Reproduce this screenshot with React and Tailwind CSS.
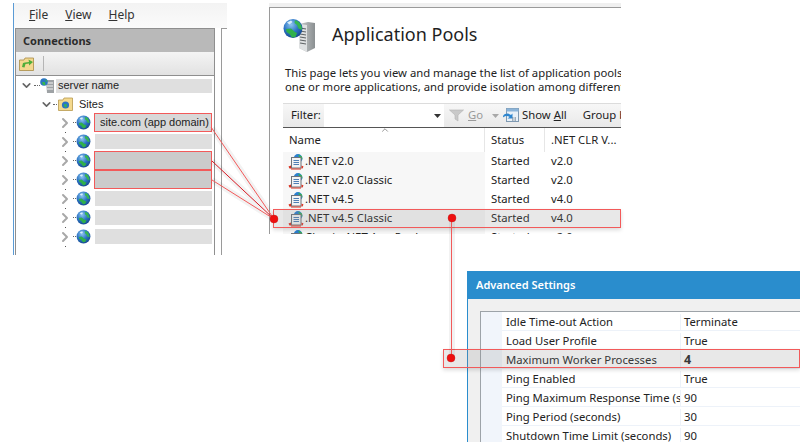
import { ChevronDown, ChevronRight, ChevronUp } from 'lucide-react';

const Globe = ({ size = 16, id = 'g' }) => (
  <svg width={size} height={size} viewBox="0 0 16 16" className="shrink-0">
    <defs>
      <radialGradient id={id} cx="0.4" cy="0.3" r="0.8">
        <stop offset="0" stopColor="#8fc6f0" />
        <stop offset="0.5" stopColor="#2b74c4" />
        <stop offset="1" stopColor="#123f82" />
      </radialGradient>
    </defs>
    <circle cx="8" cy="8" r="7.4" fill={`url(#${id})`} />
    <path d="M3 8.5 L6 8 L9 10.5 L11 11 L10 13.5 L7.5 14 L5.5 11.5 L3.5 10.5 Z" fill="#2fb04a" />
    <path d="M9.5 2 L12.5 3 L14 6 L14.6 8.5 L12 8 L11 5.5 L9.5 4.5 Z" fill="#35b552" />
    <path d="M4 3.5 L6.5 2.4 L7.5 3.5 L5.5 5 Z" fill="#d8eefb" />
  </svg>
);

const ServerGlobe = ({ id = 'sg' }) => (
  <svg width="32" height="33" viewBox="0 0 32 33" className="shrink-0">
    <defs>
      <linearGradient id={`${id}-t`} x1="0" x2="1" y1="0" y2="0">
        <stop offset="0" stopColor="#c9cccd" />
        <stop offset="1" stopColor="#8a8f91" />
      </linearGradient>
      <radialGradient id={`${id}-g`} cx="0.4" cy="0.3" r="0.8">
        <stop offset="0" stopColor="#8fc6f0" />
        <stop offset="0.5" stopColor="#2b74c4" />
        <stop offset="1" stopColor="#123f82" />
      </radialGradient>
    </defs>
    <path d="M16 5 L25 3 L32 4 L32 29 L24 33 L16 29 Z" fill={`url(#${id}-t)`} />
    <path d="M16 5 L24 6 L24 33 L16 29 Z" fill="#dfe1e2" />
    <path d="M17 9 L23 10 M17 12 L23 13 M17 15 L23 16 M17 18 L23 19 M17 21 L23 22 M17 24 L23 25" stroke="#5f6466" strokeWidth="1.2" />
    <circle cx="10" cy="9.5" r="9.5" fill={`url(#${id}-g)`} />
    <path d="M3 10 L8 9.5 L12 13 L14 14 L12.5 18 L9 18.5 L6.5 15 L3.5 13 Z" fill="#2fb04a" />
    <path d="M12 1 L16 3 L18.5 7 L19 11 L15.5 9.5 L14 6 L11.5 4 Z" fill="#35b552" />
    <path d="M4 3.5 L8 1.4 L9.5 3 L6.5 5.5 Z" fill="#d8eefb" />
  </svg>
);

const ServerSmall = () => (
  <svg width="14" height="15" viewBox="0 0 14 15" className="shrink-0">
    <path d="M6 2 L14 2 L14 15 L7 15 Z" fill="#9ea2a5" />
    <path d="M7 5 H13 M7 8 H13 M7 11 H13" stroke="#f2f2f2" strokeWidth="1" />
    <circle cx="4" cy="4" r="3.8" fill="#2b74c4" />
    <path d="M2 4 L5 4 L5.5 7 L3 7 Z M5 1 L7.5 3 L6 4 Z" fill="#35b552" />
  </svg>
);

const FolderGlobe = () => (
  <svg width="15" height="14" viewBox="0 0 15 14" className="shrink-0">
    <path d="M0.5 3 L5 3 L6 1 L14.5 1 L14.5 13.5 L0.5 13.5 Z" fill="#f4d98e" stroke="#b8994e" strokeWidth="0.8" />
    <circle cx="7.5" cy="8" r="3.6" fill="#2b74c4" />
    <path d="M6 7 L9 7.5 L8.5 10.5 L6.5 10 Z" fill="#35b552" />
  </svg>
);

const ConnectFolder = () => (
  <svg width="15" height="15" viewBox="0 0 15 15" className="shrink-0">
    <path d="M0.5 4 L5 4 L6 2 L14.5 2 L14.5 14.5 L0.5 14.5 Z" fill="#f3d88f" stroke="#a88b45" strokeWidth="0.8" />
    <path d="M3 11 L4 7 L6 6.5 L10 6 L9.5 3.5 L14 6 L10 9.5 L10 7.5 L6.5 8 L5.5 11.5 Z" fill="#4fae3a" />
  </svg>
);

const PoolIcon = () => (
  <svg width="16" height="16" viewBox="0 0 16 16" className="shrink-0">
    <circle cx="10" cy="4.5" r="4.4" fill="#2b7fd0" />
    <path d="M10 0.5 L14 2.5 L14.4 5.5 L12 4.5 Z" fill="#35b552" />
    <rect x="3.5" y="3.5" width="9.5" height="10.5" fill="#f2f3f4" stroke="#6f747a" strokeWidth="1" />
    <path d="M5.5 6.5 H11 M5.5 8.5 H11 M5.5 10.5 H11" stroke="#4f7fb5" strokeWidth="1" />
    <path d="M0.5 12.5 L3 11.5 L3 14.5 L1.5 14.5 Z M13.5 11.5 L15.5 12.5 L14.5 14.5 L13.5 14.5 Z M3 14.5 H13 V15.5 H3 Z" fill="#d8301f" />
  </svg>
);

const Funnel = () => (
  <svg width="15" height="13" viewBox="0 0 15 13" className="shrink-0">
    <path d="M0.5 1 L14.5 1 L9 6 L9 12 L6 10 L6 6 Z" fill="#c9c9c9" stroke="#b4b4b4" strokeWidth="0.6" />
  </svg>
);

const ShowAllIcon = () => (
  <svg width="16" height="16" viewBox="0 0 16 16" className="shrink-0">
    <rect x="3.5" y="0.5" width="12" height="13" fill="#e9f1f8" stroke="#7f9ab3" />
    <rect x="3.5" y="0.5" width="12" height="3" fill="#8cb4d8" />
    <path d="M0 8 C2 5 6 5 8 7 L9.5 5.5 L9.5 10.5 L4.5 10.5 L6.5 9 C5 7.5 2 7.5 0 9.5 Z" fill="#2e86cf" />
    <path d="M9 10 H14 M9 12 H14" stroke="#5b6d7d" strokeWidth="1" strokeDasharray="1.5 1" />
  </svg>
);

const Caret = ({ color = '#333' }) => (
  <svg width="7" height="4" viewBox="0 0 7 4" className="shrink-0">
    <path d="M0 0 H7 L3.5 4 Z" fill={color} />
  </svg>
);

const siteRows = [
  { label: 'site.com (app domain)', boxed: true },
  {},
  { boxed: true, dark: true },
  { boxed: true, dark: true },
  {},
  {},
  {},
];

const SiteRow = ({ row, index }) => (
  <div className="relative flex items-center h-[19px] pl-[41px]">
    <ChevronRight size={16} strokeWidth={3} className="shrink-0 text-[#a8a8a8]" />
    <span className="w-[3px] border-t border-dotted border-[#666]" />
    <Globe size={15} id={`site-${index}`} />
    {row.boxed ? (
      <div className={`ml-[3px] w-[118px] h-[19px] pl-[5px] flex items-center border border-[#f25a5a] text-[11px] whitespace-nowrap text-[#222] ${row.dark ? 'bg-[#cbcbcb]' : 'bg-[#d8d8d8]'}`}>
        {row.label}
      </div>
    ) : (
      <div className="ml-[4px] w-[117px] h-[15px] bg-[#dfdfdf]" />
    )}
    <span className="absolute left-[49px] bottom-[-1px] w-px h-px bg-[#555]" />
  </div>
);

const ConnectionsWindow = () => (
  <div className="absolute left-[13px] top-[3px] w-[214px] h-[252px] flex flex-col border-l border-[#5b9bd5] overflow-hidden">
    <div className="h-[25px] shrink-0 flex items-center gap-[17px] pl-[15px] pb-[2px] bg-gradient-to-b from-[#f3f3f3] to-[#fbfbfb] text-[12px] text-[#333]">
      <span><span className="underline">F</span>ile</span>
      <span><span className="underline">V</span>iew</span>
      <span><span className="underline">H</span>elp</span>
    </div>
    <div className="flex-1 flex pl-[1px]">
      <div className="w-[200px] flex flex-col border-x border-[#8f8f8f]">
        <div className="h-[24px] shrink-0 flex items-center pl-[7px] pt-[1px] bg-[#b9b9b9] border-t border-[#8f8f8f] text-[11px] font-bold text-[#2b2b2b]">
          Connections
        </div>
        <div className="h-[24px] shrink-0 flex items-center pl-[3px] gap-[9px] bg-gradient-to-b from-[#f4f4f4] to-[#e2e2e2] border-b border-[#8f8f8f]">
          <ConnectFolder />
          <span className="w-px h-[15px] bg-[#b5b5b5]" />
        </div>
        <div className="flex-1 bg-white font-['Liberation_Sans',sans-serif]">
          <div className="flex items-center h-[19px] pl-[4px]">
            <ChevronDown size={13} strokeWidth={3} className="shrink-0 text-[#666]" />
            <span className="w-[6px] ml-[1px] border-t border-dotted border-[#666]" />
            <ServerSmall />
            <div className="ml-[2px] w-[156px] h-[14px] pl-[2px] flex items-center bg-[#dfdfdf] text-[11px] text-[#222]">server name</div>
          </div>
          <div className="flex items-center h-[18px] pl-[24px]">
            <ChevronDown size={13} strokeWidth={3} className="shrink-0 text-[#666]" />
            <span className="w-[4px] mr-[1px] border-t border-dotted border-[#666]" />
            <FolderGlobe />
            <span className="ml-[6px] text-[11px] text-[#222]">Sites</span>
          </div>
          {siteRows.map((row, i) => (
            <SiteRow key={i} row={row} index={i} />
          ))}
        </div>
      </div>
      <div className="flex-1 ml-[6px] bg-white border-l border-t border-[#9a9a9a]" />
    </div>
  </div>
);

const pools = [
  { name: '.NET v2.0', clr: 'v2.0' },
  { name: '.NET v2.0 Classic', clr: 'v2.0' },
  { name: '.NET v4.5', clr: 'v4.0' },
  { name: '.NET v4.5 Classic', clr: 'v4.0' },
  { name: 'Classic .NET App Pool', clr: 'v2.0' },
];

const PoolsWindow = () => (
  <div className="absolute left-[269px] top-[3px] w-[352px] h-[231px] flex flex-col overflow-hidden">
    <div className="h-[4px] shrink-0 bg-[#f0f0f0]" />
    <div className="flex-1 min-h-0 flex flex-col border-l border-t border-[#9a9a9a] bg-white pl-[13px] text-[#222]">
      <div className="h-[44px] shrink-0 flex items-end">
        <ServerGlobe />
        <span className="ml-[17px] mb-[5px] text-[18px] leading-[26px] text-[#1f1f1f]">Application Pools</span>
      </div>
      <div className="mt-[14px] pl-[2px] text-[11.3px] leading-[14px] whitespace-nowrap">
        <p>This page lets you view and manage the list of application pools on the server. Application pools are</p>
        <p>one or more applications, and provide isolation among different applications on the server.</p>
      </div>
      <div className="mt-[9px] h-[24px] shrink-0 flex items-center bg-gradient-to-b from-[#f7f7f7] to-[#e9e9e9] border-t border-[#dcdcdc] text-[11.3px] whitespace-nowrap">
        <span className="w-[41px] shrink-0 pl-[8px]">Filter:</span>
        <div className="w-[120px] h-full shrink-0 bg-white flex items-center justify-end pr-[3px]">
          <Caret />
        </div>
        <span className="ml-[5px]"><Funnel /></span>
        <span className="ml-[4px] text-[#9a9a9a]"><span className="underline">G</span>o</span>
        <span className="ml-[9px]"><Caret color="#a8a8a8" /></span>
        <span className="ml-[4px]"><ShowAllIcon /></span>
        <span className="ml-[3px]">Show <span className="underline">A</span>ll</span>
        <span className="ml-[10px] w-px h-[14px] bg-[#b5b5b5]" />
        <span className="ml-[6px]">Group by</span>
      </div>
      <div className="relative h-[25px] shrink-0 flex items-center bg-white border-t border-[#555] text-[11.3px]">
        <ChevronUp size={10} strokeWidth={1.5} className="absolute left-[97px] top-[-3px] text-[#555]" />
        <span className="w-[202px] shrink-0 pl-[6px] h-full flex items-center border-r border-[#e6e6e6]">Name</span>
        <span className="w-[60px] shrink-0 pl-[6px] h-full flex items-center border-r border-[#e6e6e6]">Status</span>
        <span className="pl-[6px] whitespace-nowrap">.NET CLR V...</span>
      </div>
      {pools.map((pool) => (
        <div key={pool.name} className="h-[19px] shrink-0 flex items-center text-[11.3px]">
          <div className="w-[202px] h-full shrink-0 pl-[5px] flex items-center gap-[1px] bg-[#f7f7f7]">
            <PoolIcon />
            <span>{pool.name}</span>
          </div>
          <span className="w-[60px] shrink-0 pl-[6px]">Started</span>
          <span className="pl-[6px]">{pool.clr}</span>
        </div>
      ))}
    </div>
  </div>
);

const settings = [
  { name: 'Idle Time-out Action', value: 'Terminate' },
  { name: 'Load User Profile', value: 'True' },
  { name: 'Maximum Worker Processes', value: '4', bold: true },
  { name: 'Ping Enabled', value: 'True' },
  { name: 'Ping Maximum Response Time (seconds)', value: '90' },
  { name: 'Ping Period (seconds)', value: '30' },
  { name: 'Shutdown Time Limit (seconds)', value: '90' },
];

const SettingsWindow = () => (
  <div className="absolute left-[467px] top-[271px] w-[333px] h-[171px] flex flex-col border-l border-[#2a8dcd] overflow-hidden">
    <div className="h-[28px] shrink-0 flex items-center pl-[8px] bg-[#2a8dcd] text-[11px] font-semibold text-white">
      Advanced Settings
    </div>
    <div className="flex-1 min-h-0 bg-[#f0f0f0] pl-[12px] pt-[12px]">
      <div className="h-full flex border-l border-t border-[#9da3a8] bg-white">
        <div className="w-[21px] shrink-0 bg-[#f1f5fb]" />
        <div className="flex-1 min-w-0">
          {settings.map((row) => (
            <div key={row.name} className="h-[19px] pt-[2px] flex items-center border-b border-[#edf2f9] text-[11.3px] text-[#222]">
              <span className="w-[178px] h-full shrink-0 pl-[4px] flex items-center overflow-hidden whitespace-nowrap">
                {row.name}
              </span>
              <span className={`pl-[3px] border-l border-[#edf2f9] ${row.bold ? 'font-bold text-[12.5px]' : ''}`}>{row.value}</span>
            </div>
          ))}
        </div>
      </div>
    </div>
  </div>
);

const Annotations = () => (
  <>
    <div className="absolute left-[273px] top-[209px] w-[348px] h-[19px] bg-[#8c8c8c]/20 border border-[#f25a5a] shadow-[0_2px_4px_rgba(0,0,0,0.15)]" />
    <div className="absolute left-[443px] top-[349px] w-[357px] h-[19px] bg-[#8c8c8c]/20 border border-[#f25a5a] shadow-[0_2px_4px_rgba(0,0,0,0.15)]" />
    <svg width="800" height="442" viewBox="0 0 800 442" className="absolute inset-0 pointer-events-none">
      <g stroke="#000" strokeOpacity="0.05" strokeWidth="6" fill="none">
        <path d="M212 128 L274 219 M212 161 L274 219 M212 180 L274 219" />
        <path d="M452 218 V358" />
      </g>
      <g fill="none" strokeWidth="1">
        <path d="M211 127 L274 219" stroke="#f25a5a" />
        <path d="M212 161 L274 219" stroke="#d81a24" />
        <path d="M212 180 L274 219" stroke="#f25a5a" />
        <path d="M451.5 218 V358" stroke="#f25a5a" />
      </g>
      <g fill="#ee0f0f" stroke="#b51a1a" strokeOpacity="0.35" strokeWidth="1">
        <circle cx="274" cy="219" r="4" />
        <circle cx="452" cy="218" r="4" />
        <circle cx="451" cy="358" r="4" />
      </g>
    </svg>
  </>
);

const App = () => (
  <div className="relative w-[800px] h-[442px] overflow-hidden bg-white font-['Noto_Sans',sans-serif]">
    <ConnectionsWindow />
    <PoolsWindow />
    <SettingsWindow />
    <Annotations />
  </div>
);

export default App;
